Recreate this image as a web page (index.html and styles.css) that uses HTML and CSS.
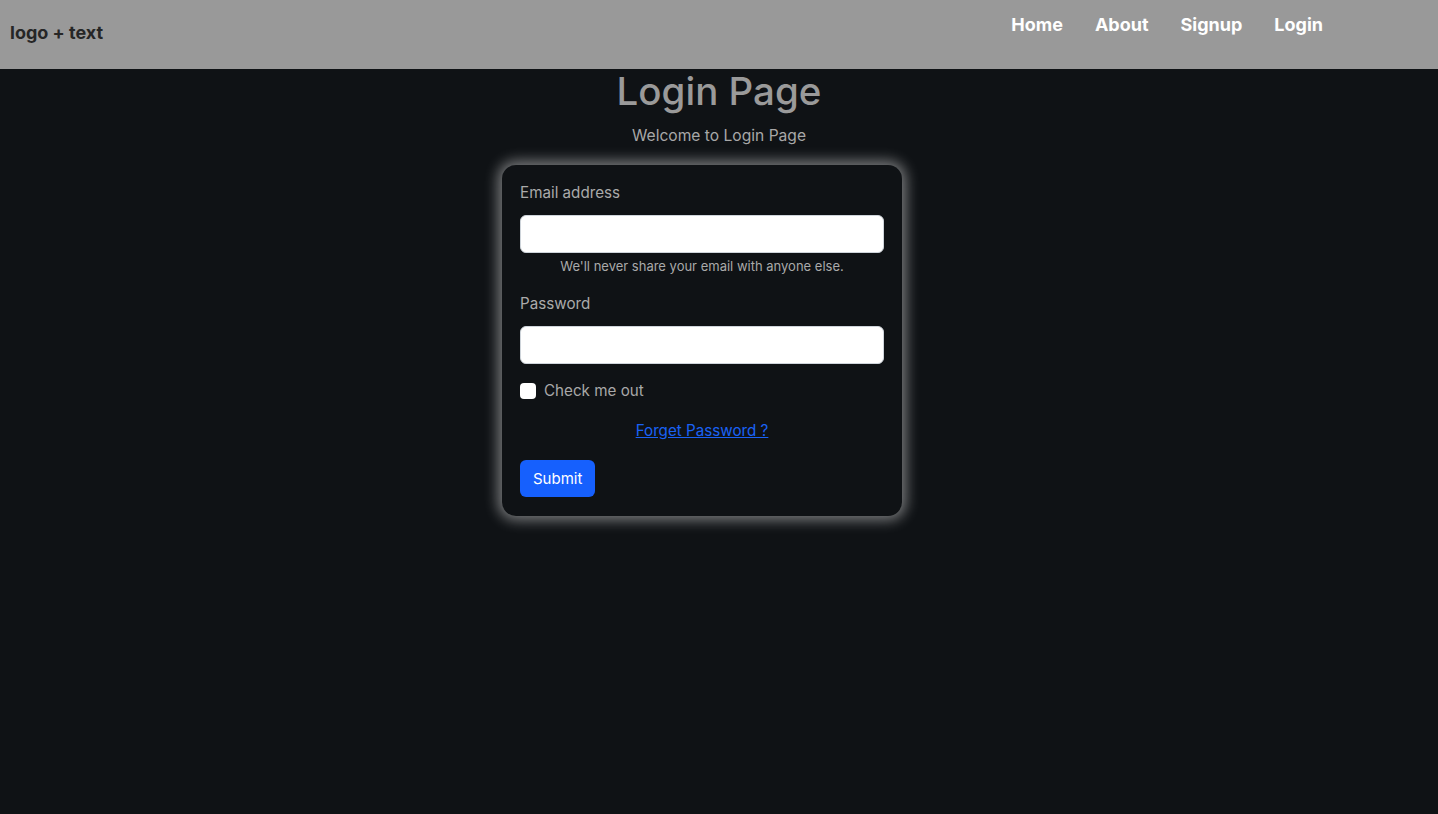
FILE: index.html
```html
<!DOCTYPE html>
<html lang="en">
<head>
<meta charset="utf-8">
<title>Login Page</title>
<link rel="stylesheet" href="styles.css">
</head>
<body>
<header class="navbar">
  <div class="brand">logo + text</div>
  <nav class="nav">
    <a href="#">Home</a>
    <a href="#">About</a>
    <a href="#">Signup</a>
    <a href="#">Login</a>
  </nav>
</header>
<main class="main">
  <h1 class="title">Login Page</h1>
  <p class="subtitle">Welcome to Login Page</p>
  <form class="card">
    <label class="label">Email address</label>
    <input class="input" type="email">
    <div class="help">We'll never share your email with anyone else.</div>
    <label class="label pw">Password</label>
    <input class="input" type="password">
    <div class="check"><span class="box"></span><span>Check me out</span></div>
    <div class="forgot"><a href="#">Forget Password ?</a></div>
    <div><button class="btn" type="button">Submit</button></div>
  </form>
</main>
</body>
</html>
```
FILE: styles.css
```css
* { box-sizing: border-box; }
html, body { margin: 0; padding: 0; }
body {
  background: #0f1215;
  font-family: Inter, Lato, sans-serif;
  height: 814px;
}
.navbar {
  height: 69px;
  background: #999999;
  display: flex;
  justify-content: space-between;
}
.brand {
  padding: 22px 0 0 10px;
  font-size: 18px;
  font-weight: 700;
  color: #262626;
  line-height: 22px;
}
.nav {
  display: flex;
  gap: 32px;
  padding: 13px 115px 0 0;
}
.nav a {
  color: #fff;
  text-decoration: none;
  font-weight: 700;
  font-size: 18px;
  line-height: 24px;
}
.main {
  display: flex;
  flex-direction: column;
  align-items: center;
}
.title {
  margin: -1px 0 0;
  font-size: 38.5px;
  font-weight: 500;
  color: #9a9a9a;
  line-height: 46px;
}
.subtitle {
  margin: 12px 0 19px;
  font-size: 15.6px;
  color: #a8a8a8;
  line-height: 20px;
}
.card {
  width: 400px;
  margin-right: 34px;
  background: #0f1215;
  border-radius: 14px;
  box-shadow: 0 0 14px 4px rgba(255,255,255,0.45);
  padding: 18px 18px 19px;
  display: flex;
  flex-direction: column;
}
.label {
  color: #aaaaaa;
  font-size: 15.2px;
  line-height: 20px;
  margin-bottom: 12px;
}
.input {
  height: 38px;
  width: 100%;
  border: 1px solid #ced4da;
  border-radius: 6px;
  background: #fff;
}
.help {
  text-align: center;
  color: #aaaaaa;
  font-size: 13px;
  line-height: 16px;
  margin: 5px 0 20px;
}
.check {
  display: flex;
  align-items: center;
  gap: 8px;
  margin-top: 17px;
  color: #a8a8a8;
  font-size: 15.2px;
  line-height: 20px;
}
.box {
  width: 16px;
  height: 16px;
  background: #fff;
  border-radius: 4px;
}
.forgot {
  text-align: center;
  margin-top: 20px;
  font-size: 15.2px;
  line-height: 20px;
}
.forgot a { color: #1a62f5; }
.btn {
  margin-top: 19px;
  background: #1660fd;
  color: #fff;
  border: none;
  border-radius: 6px;
  height: 37px;
  padding: 0 13px;
  font-family: inherit;
  font-size: 15px;
}
```
